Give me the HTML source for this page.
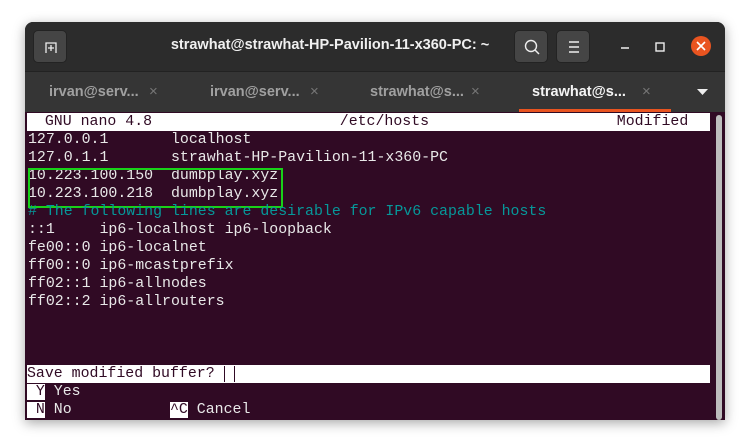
<!DOCTYPE html>
<html><head><meta charset="utf-8"><style>
*{margin:0;padding:0;box-sizing:border-box}
body{width:750px;height:448px;background:#fff;position:relative;overflow:hidden;font-family:"Liberation Sans",sans-serif}
.win{position:absolute;left:25px;top:22px;width:700px;height:398px;background:#2c2c2c;border-radius:8px 8px 0 0;box-shadow:0 3px 12px rgba(0,0,0,.35);overflow:hidden}
.title{position:absolute;left:0;top:0;width:700px;height:49px;background:#2c2c2c}
.ttxt{position:absolute;left:0;width:610px;top:15px;text-align:center;color:#f0f0f0;font-weight:bold;font-size:14.5px}
.btn{position:absolute;top:8px;width:34px;height:33px;background:#454545;border-radius:5px;border:1px solid #232323}
.tabs{position:absolute;left:0;top:49px;width:700px;height:41px;background:#353535;border-top:1px solid #222}
.tab{position:absolute;top:0;height:40px;width:161px;color:#a0a0a0;font-size:14.5px;font-weight:bold;line-height:40px}
.tab .x{position:absolute;left:124px;top:0;color:#777;font-weight:normal;font-size:15px}
.term{position:absolute;left:0;top:90px;width:700px;height:308px;background:#300a24;font-family:"Liberation Mono",monospace;font-size:14.9px;color:#e8e8e8}
.ln{position:absolute;left:3px;height:18px;line-height:18px;white-space:pre}
.inv{background:#fff;color:#300a24}
</style></head><body>
<div class="win">
 <div class="title">
  <div class="btn" style="left:8px"><svg width="34" height="33" viewBox="0 0 34 33"><path d="M12 22V12h10v10M17 14v6M14 17h6" stroke="#eee" stroke-width="1.3" fill="none"/></svg></div>
  <div class="ttxt">strawhat@strawhat-HP-Pavilion-11-x360-PC: ~</div>
  <div class="btn" style="left:489px"><svg width="34" height="33"><circle cx="16" cy="15" r="5.5" stroke="#eee" stroke-width="1.4" fill="none"/><path d="M20 19l4 4" stroke="#eee" stroke-width="1.5"/></svg></div>
  <div class="btn" style="left:531px"><svg width="34" height="33"><path d="M12 11h10M12 16h10M12 21h10" stroke="#eee" stroke-width="1.4"/></svg></div>
  <svg style="position:absolute;left:590px;top:10px" width="110" height="30"><path d="M6 16h8" stroke="#eee" stroke-width="1.4"/><rect x="41" y="11" width="8" height="8" stroke="#eee" stroke-width="1.4" fill="none"/><circle cx="86" cy="14" r="10" fill="#e95420"/><path d="M82 10l8 8M90 10l-8 8" stroke="#fff" stroke-width="1.6"/></svg>
 </div>
 <div class="tabs">
  <div class="tab" style="left:0;padding-left:24px">irvan@serv...<span class="x">×</span></div>
  <div class="tab" style="left:161px;padding-left:24px">irvan@serv...<span class="x">×</span></div>
  <div class="tab" style="left:322px;padding-left:23px">strawhat@s...<span class="x">×</span></div>
  <div class="tab" style="left:483px;padding-left:24px;color:#f4f4f4">strawhat@s...<span class="x" style="left:134px">×</span></div>
  <div style="position:absolute;left:494px;top:37px;width:152px;height:3px;background:#e95420"></div>
  <svg style="position:absolute;left:671px;top:16px" width="14" height="8"><path d="M1 1h11l-5.5 6z" fill="#eee"/></svg>
 </div>
 <div class="term">
  <div class="ln inv" style="top:1px;width:683px;left:2px">  GNU nano 4.8                     /etc/hosts                     Modified</div>
  <div class="ln" style="top:19px">127.0.0.1       localhost</div>
  <div class="ln" style="top:37px">127.0.1.1       strawhat-HP-Pavilion-11-x360-PC</div>
  <div class="ln" style="top:55px">10.223.100.150  dumbplay.xyz</div>
  <div class="ln" style="top:73px">10.223.100.218  dumbplay.xyz</div>
  <div style="position:absolute;left:3px;top:56px;width:255px;height:40px;border:2px solid #19d119"></div>
  <div class="ln" style="top:91px;color:#06989a"># The following lines are desirable for IPv6 capable hosts</div>
  <div class="ln" style="top:109px">::1     ip6-localhost ip6-loopback</div>
  <div class="ln" style="top:127px">fe00::0 ip6-localnet</div>
  <div class="ln" style="top:145px">ff00::0 ip6-mcastprefix</div>
  <div class="ln" style="top:163px">ff02::1 ip6-allnodes</div>
  <div class="ln" style="top:181px">ff02::2 ip6-allrouters</div>
  <div class="ln inv" style="top:253px;width:683px;left:2px">Save modified buffer? <span style="border-left:1px solid #300a24;border-right:1px solid #300a24"> </span></div>
  <div class="ln" style="top:271px;left:2px"><span class="inv"> Y</span> Yes</div>
  <div class="ln" style="top:289px;left:2px"><span class="inv"> N</span> No           <span class="inv">^C</span> Cancel</div>
  <div style="position:absolute;left:691px;top:3px;width:6px;height:305px;background:#bdbdbd;border-radius:3px"></div>
 </div>
</div>
</body></html>
